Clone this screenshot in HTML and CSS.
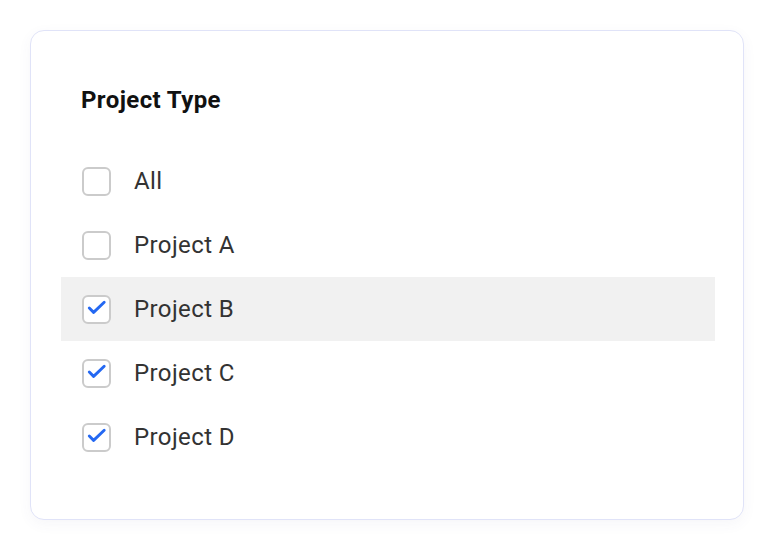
FILE: index.html
```html
<!DOCTYPE html>
<html lang="en">
<head>
    <meta charset="UTF-8">
    <meta name="viewport" content="width=device-width, initial-scale=1.0">
    <title>Project Type Filter</title>
    <link rel="stylesheet" href="styles.css">
</head>
<body>
    <div class="filter-card">
        <div class="filter-title">Project Type</div>
        <ul class="filter-list">
            <li class="filter-item">
                <span class="checkbox"></span>
                <span class="label">All</span>
            </li>
            <li class="filter-item">
                <span class="checkbox"></span>
                <span class="label">Project A</span>
            </li>
            <li class="filter-item hovered">
                <span class="checkbox checked">
                    <svg viewBox="0 0 26 26"><path d="M5.5 12l4.5 4.5 11-10.5"/></svg>
                </span>
                <span class="label">Project B</span>
            </li>
            <li class="filter-item">
                <span class="checkbox checked">
                    <svg viewBox="0 0 26 26"><path d="M5.5 12l4.5 4.5 11-10.5"/></svg>
                </span>
                <span class="label">Project C</span>
            </li>
            <li class="filter-item">
                <span class="checkbox checked">
                    <svg viewBox="0 0 26 26"><path d="M5.5 12l4.5 4.5 11-10.5"/></svg>
                </span>
                <span class="label">Project D</span>
            </li>
        </ul>
    </div>
</body>
</html>
```
FILE: styles.css
```css
body {
    font-family: Roboto, 'Liberation Sans', sans-serif;
    margin: 0;
    padding: 30px;
    background-color: #fff;
}

.filter-card {
    width: 654px;
    padding: 55px 28px 50px 30px;
    background: #fff;
    border: 1.5px solid #e0e3f8;
    border-radius: 14px;
    box-shadow: 0px 4px 14px rgba(80, 80, 140, 0.05);
}

.filter-title {
    padding-left: 20px;
    font-size: 24px;
    font-weight: bold;
    letter-spacing: 0.4px;
    line-height: 28px;
    color: #111;
    margin-bottom: 35px;
}

.filter-list {
    list-style: none;
    margin: 0;
    padding: 0;
}

.filter-item {
    display: flex;
    align-items: center;
    gap: 23px;
    height: 64px;
    padding-left: 21px;
}

.filter-item.hovered {
    background: #f1f1f1;
}

.checkbox {
    width: 25px;
    height: 25px;
    border: 2px solid #cbcbcb;
    border-radius: 6px;
    background: #fff;
    display: flex;
    align-items: center;
    justify-content: center;
}

.checkbox svg {
    width: 26px;
    height: 26px;
    fill: none;
    stroke: #2468f2;
    stroke-width: 3;
    stroke-linecap: round;
    stroke-linejoin: round;
}

.label {
    font-size: 24px;
    letter-spacing: 0.4px;
    color: #333;
}
```
